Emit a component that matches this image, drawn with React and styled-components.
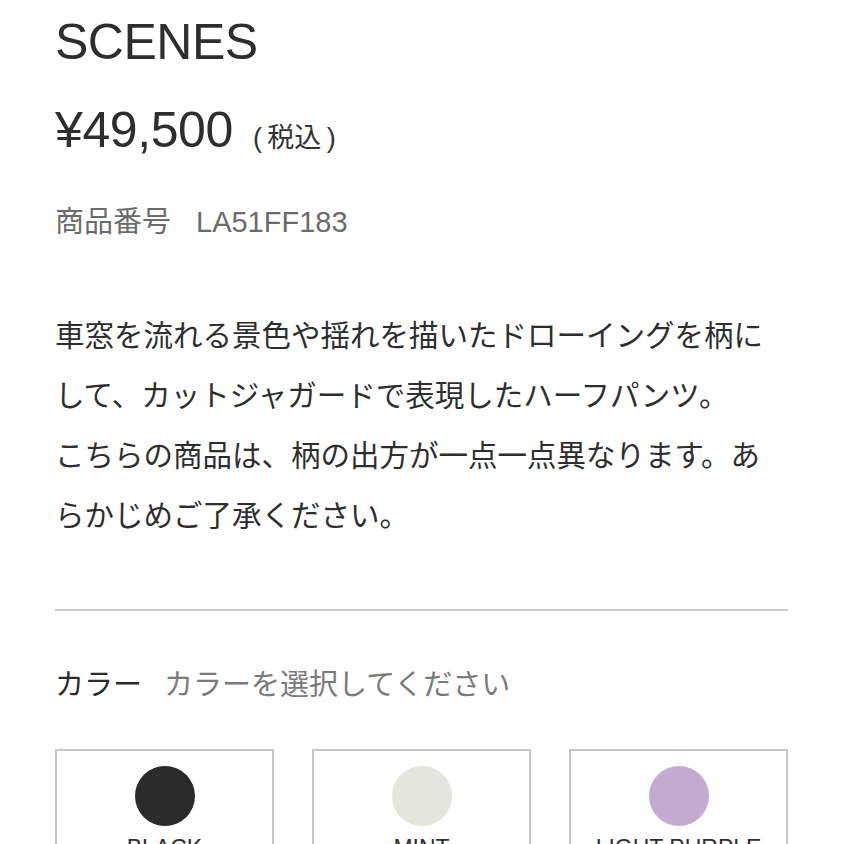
import React from 'react';
import styled, { createGlobalStyle } from 'styled-components';

const GlobalStyle = createGlobalStyle`
  html, body {
    margin: 0;
    padding: 0;
    background: #ffffff;
  }
  body {
    font-family: "Liberation Sans", "Noto Sans CJK JP", sans-serif;
    color: #2e2e2e;
  }
`;

const Page = styled.main`
  padding: 12px 56px 40px 55px;
  display: flex;
  flex-direction: column;
`;

const Title = styled.h1`
  margin: 0;
  font-size: 50px;
  font-weight: 400;
  line-height: 60px;
  letter-spacing: -0.5px;
  color: #2e2e2e;
`;

const PriceRow = styled.div`
  display: flex;
  align-items: baseline;
  gap: 20px;
  margin-top: 28px;
  line-height: 60px;
`;

const Price = styled.span`
  font-size: 50px;
  letter-spacing: -0.4px;
`;

const Tax = styled.span`
  font-size: 27px;
  color: #333;
`;

const SkuRow = styled.div`
  display: flex;
  gap: 25px;
  margin-top: 34px;
  font-size: 29px;
  line-height: 40px;
  color: #6b6b6b;
`;

const Description = styled.p`
  margin: 64px 0 0;
  font-size: 29.5px;
  line-height: 60px;
  color: #2e2e2e;
`;

const Divider = styled.hr`
  margin: 63px 0 0;
  border: none;
  height: 2px;
  background: #c9c9c9;
`;

const ColorRow = styled.div`
  display: flex;
  gap: 22px;
  margin-top: 52px;
  font-size: 29px;
  line-height: 44px;
`;

const ColorLabel = styled.span`
  color: #2b2b2b;
`;

const ColorHint = styled.span`
  color: #7a7a7a;
`;

const SwatchGrid = styled.div`
  display: grid;
  grid-template-columns: repeat(3, 1fr);
  gap: 38px;
  margin-top: 42px;
`;

const Swatch = styled.button`
  display: flex;
  flex-direction: column;
  align-items: center;
  gap: 9px;
  padding: 15px 8px 20px;
  height: 140px;
  background: #fff;
  border: 2px solid #c6c6c6;
  font-family: "Liberation Sans", sans-serif;
  font-size: 23px;
  color: #2e2e2e;
  cursor: pointer;
`;

const Dot = styled.span`
  width: 60px;
  height: 60px;
  border-radius: 50%;
  background: ${p => p.$color};
`;

const colors = [
  { name: 'BLACK', hex: '#2b2b2c' },
  { name: 'MINT', hex: '#e4e5dc' },
  { name: 'LIGHT PURPLE', hex: '#c1abd1' },
];

export default function App() {
  return (
    <>
      <GlobalStyle />
      <Page>
        <Title>SCENES</Title>
        <PriceRow>
          <Price>¥49,500</Price>
          <Tax>(&thinsp;税込&thinsp;)</Tax>
        </PriceRow>
        <SkuRow>
          <span>商品番号</span>
          <span>LA51FF183</span>
        </SkuRow>
        <Description>
          車窓を流れる景色や揺れを描いたドローイングを柄に
          <br />
          して、カットジャガードで表現したハーフパンツ。
          <br />
          こちらの商品は、柄の出方が一点一点異なります。あ
          <br />
          らかじめご了承ください。
        </Description>
        <Divider />
        <ColorRow>
          <ColorLabel>カラー</ColorLabel>
          <ColorHint>カラーを選択してください</ColorHint>
        </ColorRow>
        <SwatchGrid>
          {colors.map(c => (
            <Swatch key={c.name}>
              <Dot $color={c.hex} />
              {c.name}
            </Swatch>
          ))}
        </SwatchGrid>
      </Page>
    </>
  );
}
